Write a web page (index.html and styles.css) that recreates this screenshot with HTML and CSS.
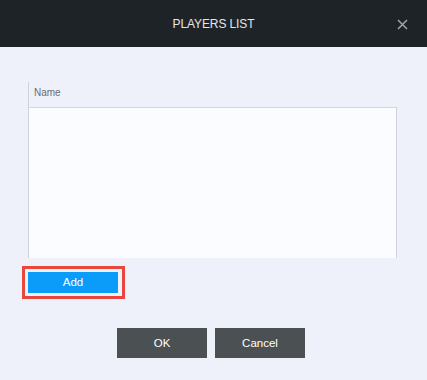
FILE: index.html
```
<!DOCTYPE html>
<html>
<head>
<meta charset="utf-8">
<link rel="stylesheet" href="styles.css">
</head>
<body>
<div class="dialog">
  <div class="header">
    <div></div>
    <div class="title">PLAYERS LIST</div>
    <div class="close">
      <svg width="11" height="11" viewBox="0 0 11 11"><path d="M1 1 L10 10 M10 1 L1 10" stroke="#9ea2a4" stroke-width="1.6" fill="none"/></svg>
    </div>
  </div>
  <div class="content">
    <div class="table">
      <div class="thead">Name</div>
      <div class="tbody"></div>
    </div>
    <div class="add-wrap">
      <div class="add-btn">Add</div>
    </div>
    <div class="actions">
      <div class="btn">OK</div>
      <div class="btn">Cancel</div>
    </div>
  </div>
</div>
</body>
</html>
```
FILE: styles.css
```
html, body {
  margin: 0;
  padding: 0;
}
body {
  width: 427px;
  height: 380px;
  background: #eef0fa;
  font-family: "Liberation Sans", Arial, sans-serif;
  overflow: hidden;
}
.dialog {
  display: flex;
  flex-direction: column;
  height: 380px;
}
.header {
  height: 47px;
  background: #1e2327;
  display: grid;
  grid-template-columns: 1fr auto 1fr;
  align-items: center;
}
.title {
  color: #e4e6e8;
  font-size: 12px;
  letter-spacing: -0.1px;
}
.close {
  justify-self: end;
  margin-right: 19px;
  display: flex;
  margin-top: 1px;
}
.content {
  padding: 35px 30px 0 28px;
  display: flex;
  flex-direction: column;
}
.table {
  height: 176px;
  display: flex;
  flex-direction: column;
  border-left: 1px solid #cfd2dc;
}
.thead {
  height: 25px;
  line-height: 22px;
  padding-left: 5px;
  font-size: 10px;
  color: #6a6d72;
}
.tbody {
  flex: 1;
  background: #fbfcff;
  border-top: 1px solid #d3d7e4;
  border-right: 1px solid #cfd2dc;
}
.add-wrap {
  margin-top: 8px;
  margin-left: -6px;
  width: 90px;
  padding: 3px 4px 3px 3px;
  border: 3px solid #e8473d;
}
.add-btn {
  height: 21px;
  line-height: 21px;
  background: #0a9cf8;
  color: #ffffff;
  font-size: 11.5px;
  text-align: center;
}
.actions {
  margin-top: 29px;
  display: flex;
  justify-content: center;
  gap: 8px;
  margin-right: 3px;
}
.btn {
  width: 90px;
  height: 30px;
  line-height: 30px;
  background: #4b5152;
  color: #ffffff;
  font-size: 11.5px;
  text-align: center;
}
```
